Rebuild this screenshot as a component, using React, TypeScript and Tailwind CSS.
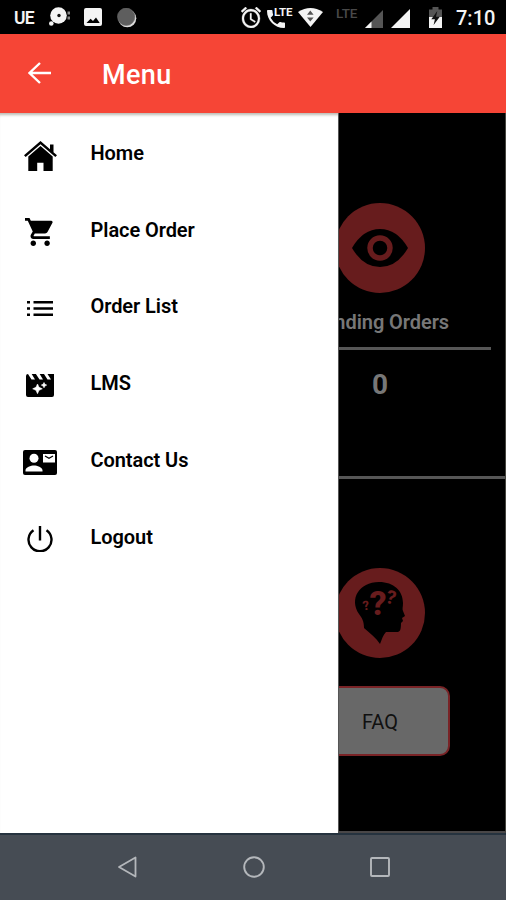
import type { ReactNode } from "react";

const Svg = ({ w, h, box, className = "", children }: { w: number; h: number; box: string; className?: string; children: ReactNode }) => (
  <svg width={w} height={h} viewBox={box} preserveAspectRatio="none" className={`block shrink-0 ${className}`} fill="currentColor">
    {children}
  </svg>
);

function StatusBar() {
  return (
    <div className="flex h-[34px] shrink-0 items-center bg-black text-[#f4f4f4]">
      <span className="ml-[14px] mt-px w-[22px] text-[17.500px] leading-5 font-semibold tracking-[-0.8px]">UE</span>
      <Svg w={22} h={20} box="0 0 22 20" className="ml-[13px]">
        <circle cx="9.500" cy="8.500" r="8.300" />
        <circle cx="2.300" cy="16.500" r="2.300" />
        <circle cx="10" cy="8.500" r="1.700" fill="#111" />
        <path d="M18.500 4.500H21v3h-2.500zM18.500 9.500H21v3h-2.500z" fill="#888" />
      </Svg>
      <Svg w={18} h={18} box="0 0 18 18" className="ml-[13px]">
        <path fillRule="evenodd" d="M2 0h14q2 0 2 2v14q0 2-2 2H2q-2 0-2-2V2Q0 0 2 0zM2.500 15h13.200L12 9.500l-3 3.600-2.400-2.300z" />
      </Svg>
      <Svg w={20} h={20} box="0 0 20 20" className="ml-[15px] mt-px">
        <circle cx="10.300" cy="10.300" r="9" fill="#ddd" />
        <circle cx="9.200" cy="8.800" r="8.700" fill="#5e5e5e" stroke="#6c6c6c" strokeWidth=".6" />
      </Svg>
      <Svg w={20} h={21} box="2 2 20 20" className="ml-[104px] mt-px">
        <path d="m22 5.720-4.600-3.860-1.290 1.530 4.600 3.860L22 5.720zM7.880 3.390 6.600 1.860 2 5.710l1.290 1.530 4.590-3.850zM12.500 8H11v6l4.750 2.850.75-1.230-4-2.370V8zM12 4c-4.970 0-9 4.030-9 9s4.020 9 9 9a9 9 0 0 0 0-18zm0 16c-3.870 0-7-3.130-7-7s3.130-7 7-7 7 3.130 7 7-3.130 7-7 7z" stroke="currentColor" strokeWidth=".3" />
      </Svg>
      <div className="ml-[6px] flex h-[22px] w-[26px] shrink-0 items-start">
        <Svg w={18} h={18} box="3 3 18 18" className="mt-[4px]">
          <path d="M20 15.500c-1.250 0-2.450-.2-3.570-.57-.35-.11-.74-.03-1.020.24l-2.200 2.200a15.050 15.050 0 0 1-6.590-6.590l2.200-2.210c.28-.26.36-.65.25-1C8.700 6.450 8.500 5.250 8.500 4c0-.55-.45-1-1-1H4c-.55 0-1 .45-1 1 0 9.390 7.610 17 17 17 .55 0 1-.45 1-1v-3.500c0-.55-.45-1-1-1z" />
        </Svg>
        <span className="-ml-[11px] mt-px text-[11.500px] leading-[11px] font-bold">LTE</span>
      </div>
      <Svg w={25} h={19} box="0 0 25 20" className="ml-[5px]">
        <path d="M0 4.200Q12.500-4 25 4.200L12.500 20z" />
        <path d="m12.300 2.500 3.300 4.500H9zM9 10h6.600l-3.300 4.300z" fill="#555" />
      </Svg>
      <span className="ml-[13px] -mt-[8px] w-[24px] text-[13.500px] leading-[13px] font-medium text-[#494949]">LTE</span>
      <Svg w={18} h={18} box="0 0 18 18" className="ml-[5px] mt-[3px]">
        <path d="M18 0v18H0z" fill="#555" />
        <path d="M6.500 11.500V18H0z" />
      </Svg>
      <Svg w={19} h={19} box="0 0 19 19" className="ml-[8px] mt-[2px]">
        <path d="M19 0v19H0z" />
      </Svg>
      <Svg w={13} h={21} box="0 0 13 21" className="ml-[19px] mt-px">
        <path d="M3.500 0h6v2.500H13V10H0V2.500h3.500z" fill="#555" />
        <path d="M0 10h13v11H0z" />
        <path d="m8.300 4-6 8.200h3.600L4.600 18l6.200-8.300H7z" fill="#111" />
      </Svg>
      <span className="ml-[14px] mt-[2px] text-[20px] leading-6 font-medium">7:10</span>
    </div>
  );
}

const items: { label: string; icon: ReactNode }[] = [
  {
    label: "Home",
    icon: (
      <Svg w={33} h={30} box="0 0 33 30" className="mt-[2px]">
        <path d="M0 14.300 16.500 0 26 8.200V3.500h3.500v7.700l3.500 3.100-1.700 1.800L16.500 3.200 1.700 16.100z" />
        <path d="M4.300 15.500 16.500 5.100l12.200 10.400V30H19.500v-8.200h-6.300V30H4.300z" />
      </Svg>
    ),
  },
  {
    label: "Place Order",
    icon: (
      <Svg w={29} h={28} box="1 2 21 20" className="mr-[2px]">
        <path d="M7 18c-1.100 0-1.990.9-1.990 2S5.900 22 7 22s2-.9 2-2-.9-2-2-2zM1 2v2h2l3.600 7.590-1.350 2.450c-.16.280-.25.610-.25.960 0 1.100.9 2 2 2h12v-2H7.420c-.14 0-.25-.11-.25-.25l.03-.12.900-1.630h7.450c.75 0 1.410-.41 1.750-1.030l3.580-6.490A1 1 0 0 0 20 4H5.210l-.94-2H1zm16 16c-1.100 0-1.990.9-1.990 2s.89 2 1.990 2 2-.9 2-2-.9-2-2-2z" />
      </Svg>
    ),
  },
  {
    label: "Order List",
    icon: (
      <Svg w={26} h={15} box="0 0 26 15">
        <path d="M0 0h3v2.500H0zM6.500 0H26v2.500H6.500zM0 6.200h3v2.500H0zM6.500 6.200H26v2.500H6.500zM0 12.500h3V15H0zM6.500 12.500H26V15H6.500z" />
      </Svg>
    ),
  },
  {
    label: "LMS",
    icon: (
      <Svg w={28} h={23} box="0 0 28 23">
        <path d="M2 0 5.500 5.500H9L5.700 0h4.200l3.600 5.500H17L13.700 0H18l3.500 5.500H25L21.500 0H28v21q0 2-2 2H2q-2 0-2-2V2Q0 0 2 0z" />
        <path d="m11.500 10 1.500 3.300 3.300 1.500-3.300 1.500-1.500 3.400-1.500-3.400-3.300-1.500 3.300-1.500zM18 8.500l.9 1.700 1.800.9-1.800.9-.9 1.800-.9-1.800-1.800-.9 1.800-.9z" fill="white" stroke="white" strokeWidth=".6" />
      </Svg>
    ),
  },
  {
    label: "Contact Us",
    icon: (
      <Svg w={34} h={25} box="0 0 34 25">
        <rect width="34" height="25" rx="2" />
        <circle cx="11" cy="8.200" r="4.500" fill="white" />
        <path d="M2.500 21.500v-1.300c0-3 5.500-4.700 8.500-4.700s8.500 1.700 8.500 4.700v1.300zM20 4h12v8.500H20z" fill="white" />
        <path d="m22 6 4 2.300L30 6" fill="none" stroke="black" strokeWidth="1.300" />
      </Svg>
    ),
  },
  {
    label: "Logout",
    icon: (
      <Svg w={26} h={26} box="0 0 26 26">
        <path d="M13 0v14.500M6.500 4.300a11.500 11.500 0 1 0 13 0" fill="none" stroke="currentColor" strokeWidth="2.400" />
      </Svg>
    ),
  },
];

function Drawer() {
  return (
    <nav className="h-[720px] w-[338px] shrink-0 bg-white pt-[4px] text-black shadow-[inset_0_4px_3px_-2px_#bbbbb4]">
      {items.map(({ label, icon }) => (
        <div key={label} className="flex h-[76.800px] items-center">
          <div className="-mt-px flex w-20 justify-center">{icon}</div>
          <span className="-mt-[5px] ml-[10.500px] text-[20px] leading-6 font-semibold tracking-[-0.07px]">{label}</span>
        </div>
      ))}
    </nav>
  );
}

function Dashboard() {
  return (
    <main className="h-[720px] min-w-0 flex-1 overflow-hidden border-x border-b-2 border-l-[#555] border-r-[#45453f] border-b-[#494748] bg-black">
      <div className="-ml-[85px] flex w-[252px] flex-col">
        <section className="flex h-[366px] flex-col items-center border-b-3 border-[#565656] pt-[90px] text-[#777]">
          <Svg w={90} h={90} box="0 0 90 90">
            <circle cx="45" cy="45" r="45" fill="#671c1d" />
            <path d="M17 45Q28 26 45 26t28 19Q62 64 45 64T17 45z" fill="black" />
            <circle cx="45" cy="45" r="10" fill="none" stroke="#671c1d" strokeWidth="5.500" />
          </Svg>
          <h2 className="mt-[17px] text-[20px] leading-6 font-semibold tracking-[-0.07px]">Pending Orders</h2>
          <div className="mt-[13px] h-[3px] w-[222px] bg-[#565656]" />
          <span className="mt-[19px] text-[28px] leading-8 font-bold">0</span>
        </section>
        <section className="flex flex-col items-center pt-[89px]">
          <Svg w={90} h={90} box="0 0 90 90">
            <circle cx="45" cy="45" r="45" fill="#671c1d" />
            <path d="M29 60c0-7-2-10-5-14C14 31 24 14 44 14c15 0 24 9 24 21 0 4-1 6 0 8l2 5-3 2 1 3-2 2c0 7-1 9-4 9H51c-3 3-4 7-6 12-4-6-9-10-16-16z" fill="black" />
            <g fill="#671c1d" fontFamily="Roboto, sans-serif" fontWeight="800" textAnchor="middle">
              <text x="43" y="47" fontSize="34">?</text>
              <text x="56" y="36" fontSize="19" transform="rotate(15 56 30)">?</text>
              <text x="31" y="42" fontSize="13" transform="rotate(-10 31 38)">?</text>
            </g>
          </Svg>
          <button className="mt-[28px] h-[70px] w-[140px] rounded-[10px] border-[2.500px] border-[#792326] bg-[#686868] pt-[2px] text-[20px] text-[#101010]">FAQ</button>
        </section>
      </div>
    </main>
  );
}

export default function App() {
  return (
    <div className="flex h-[900px] w-[506px] flex-col overflow-hidden bg-[#464c54] font-['Roboto',sans-serif]">
      <StatusBar />
      <header className="flex h-[79px] shrink-0 items-center bg-[#f64536] text-white">
        <Svg w={23} h={22} box="0 0 23 22" className="-mt-px ml-[28px]">
          <path d="M23 11H1.500M12 1 1.500 11 12 21" fill="none" stroke="currentColor" strokeWidth="2.400" />
        </Svg>
        <h1 className="ml-[51px] mt-[3px] text-[27px] leading-8 font-medium tracking-[0.4px]">Menu</h1>
      </header>
      <div className="flex shrink-0">
        <Drawer />
        <Dashboard />
      </div>
      <footer className="flex h-[67px] shrink-0 items-center border-t-2 border-[#26333f] pb-[2px] pl-[117px] text-[#b4b7bb]">
        <Svg w={20} h={22} box="0 0 20 22">
          <path d="M18.500 1.500v19L2 11z" fill="none" stroke="currentColor" strokeWidth="1.800" strokeLinejoin="round" />
        </Svg>
        <Svg w={22} h={22} box="0 0 22 22" className="ml-[106px]">
          <circle cx="11" cy="11" r="9.800" fill="none" stroke="currentColor" strokeWidth="1.900" />
        </Svg>
        <Svg w={20} h={20} box="0 0 20 20" className="ml-[105px]">
          <rect x="1" y="1" width="18" height="18" rx="1" fill="none" stroke="currentColor" strokeWidth="1.900" />
        </Svg>
      </footer>
    </div>
  );
}
